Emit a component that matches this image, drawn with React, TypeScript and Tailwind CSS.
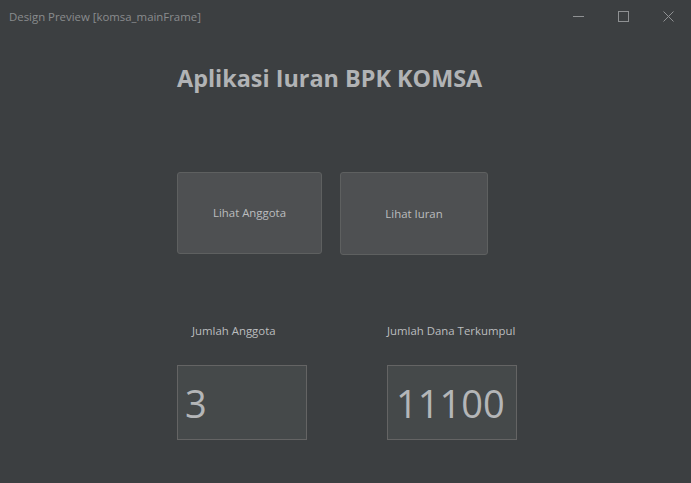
import React from "react";

export default function App() {
  const font = { fontFamily: '"Open Sans", "Noto Sans", sans-serif' };
  return (
    <div
      className="w-[691px] h-[483px] bg-[#3c3f41] flex flex-col relative overflow-hidden"
      style={font}
    >
      {/* title bar */}
      <div className="h-[33px] flex items-center pl-[9px] shrink-0">
        <span className="text-[11.4px] text-[#8a8c8e] leading-none">
          Design Preview [komsa_mainFrame]
        </span>
        <div className="ml-auto flex items-center h-full">
          <div className="w-[45px] h-full flex items-center justify-center">
            <svg width="11" height="11" viewBox="0 0 11 11">
              <line x1="0" y1="5.5" x2="11" y2="5.5" stroke="#8f9193" strokeWidth="1" />
            </svg>
          </div>
          <div className="w-[45px] h-full flex items-center justify-center">
            <svg width="11" height="11" viewBox="0 0 11 11">
              <rect x="0.5" y="0.5" width="10" height="10" fill="none" stroke="#8f9193" strokeWidth="1" />
            </svg>
          </div>
          <div className="w-[45px] h-full flex items-center justify-center">
            <svg width="11" height="11" viewBox="0 0 11 11">
              <path d="M0.5 0.5 L10.5 10.5 M10.5 0.5 L0.5 10.5" stroke="#8f9193" strokeWidth="1" />
            </svg>
          </div>
        </div>
      </div>

      {/* content */}
      <div className="pl-[177px] flex flex-col">
        <h1 className="mt-[30px] h-[30px] leading-[30px] text-[23.4px] font-bold text-[#b1b3b5]">
          Aplikasi Iuran BPK KOMSA
        </h1>

        <div className="mt-[79px] flex items-start gap-[18px]">
          <div className="w-[145px] h-[82px] bg-[#4e5052] border border-[#5e6060] rounded-[3px] flex items-center justify-center text-[11.4px] text-[#bbbdbf]">
            Lihat Anggota
          </div>
          <div className="w-[148px] h-[83px] bg-[#4e5052] border border-[#5e6060] rounded-[3px] flex items-center justify-center text-[11.4px] text-[#bbbdbf]">
            Lihat Iuran
          </div>
        </div>

        <div className="mt-[68px] flex text-[11.4px] text-[#bbbdbf] h-[16px] leading-[16px]">
          <span className="ml-[15px] w-[195px]">Jumlah Anggota</span>
          <span>Jumlah Dana Terkumpul</span>
        </div>

        <div className="mt-[26px] flex">
          <div className="w-[130px] h-[75px] bg-[#45494a] border border-[#646464] flex items-center pl-[7px] text-[38px] text-[#b4b6b8] leading-none">
            3
          </div>
          <div className="ml-[80px] w-[130px] h-[75px] bg-[#45494a] border border-[#646464] flex items-center pl-[8px] text-[38px] text-[#b4b6b8] leading-none">
            11100
          </div>
        </div>
      </div>
    </div>
  );
}
